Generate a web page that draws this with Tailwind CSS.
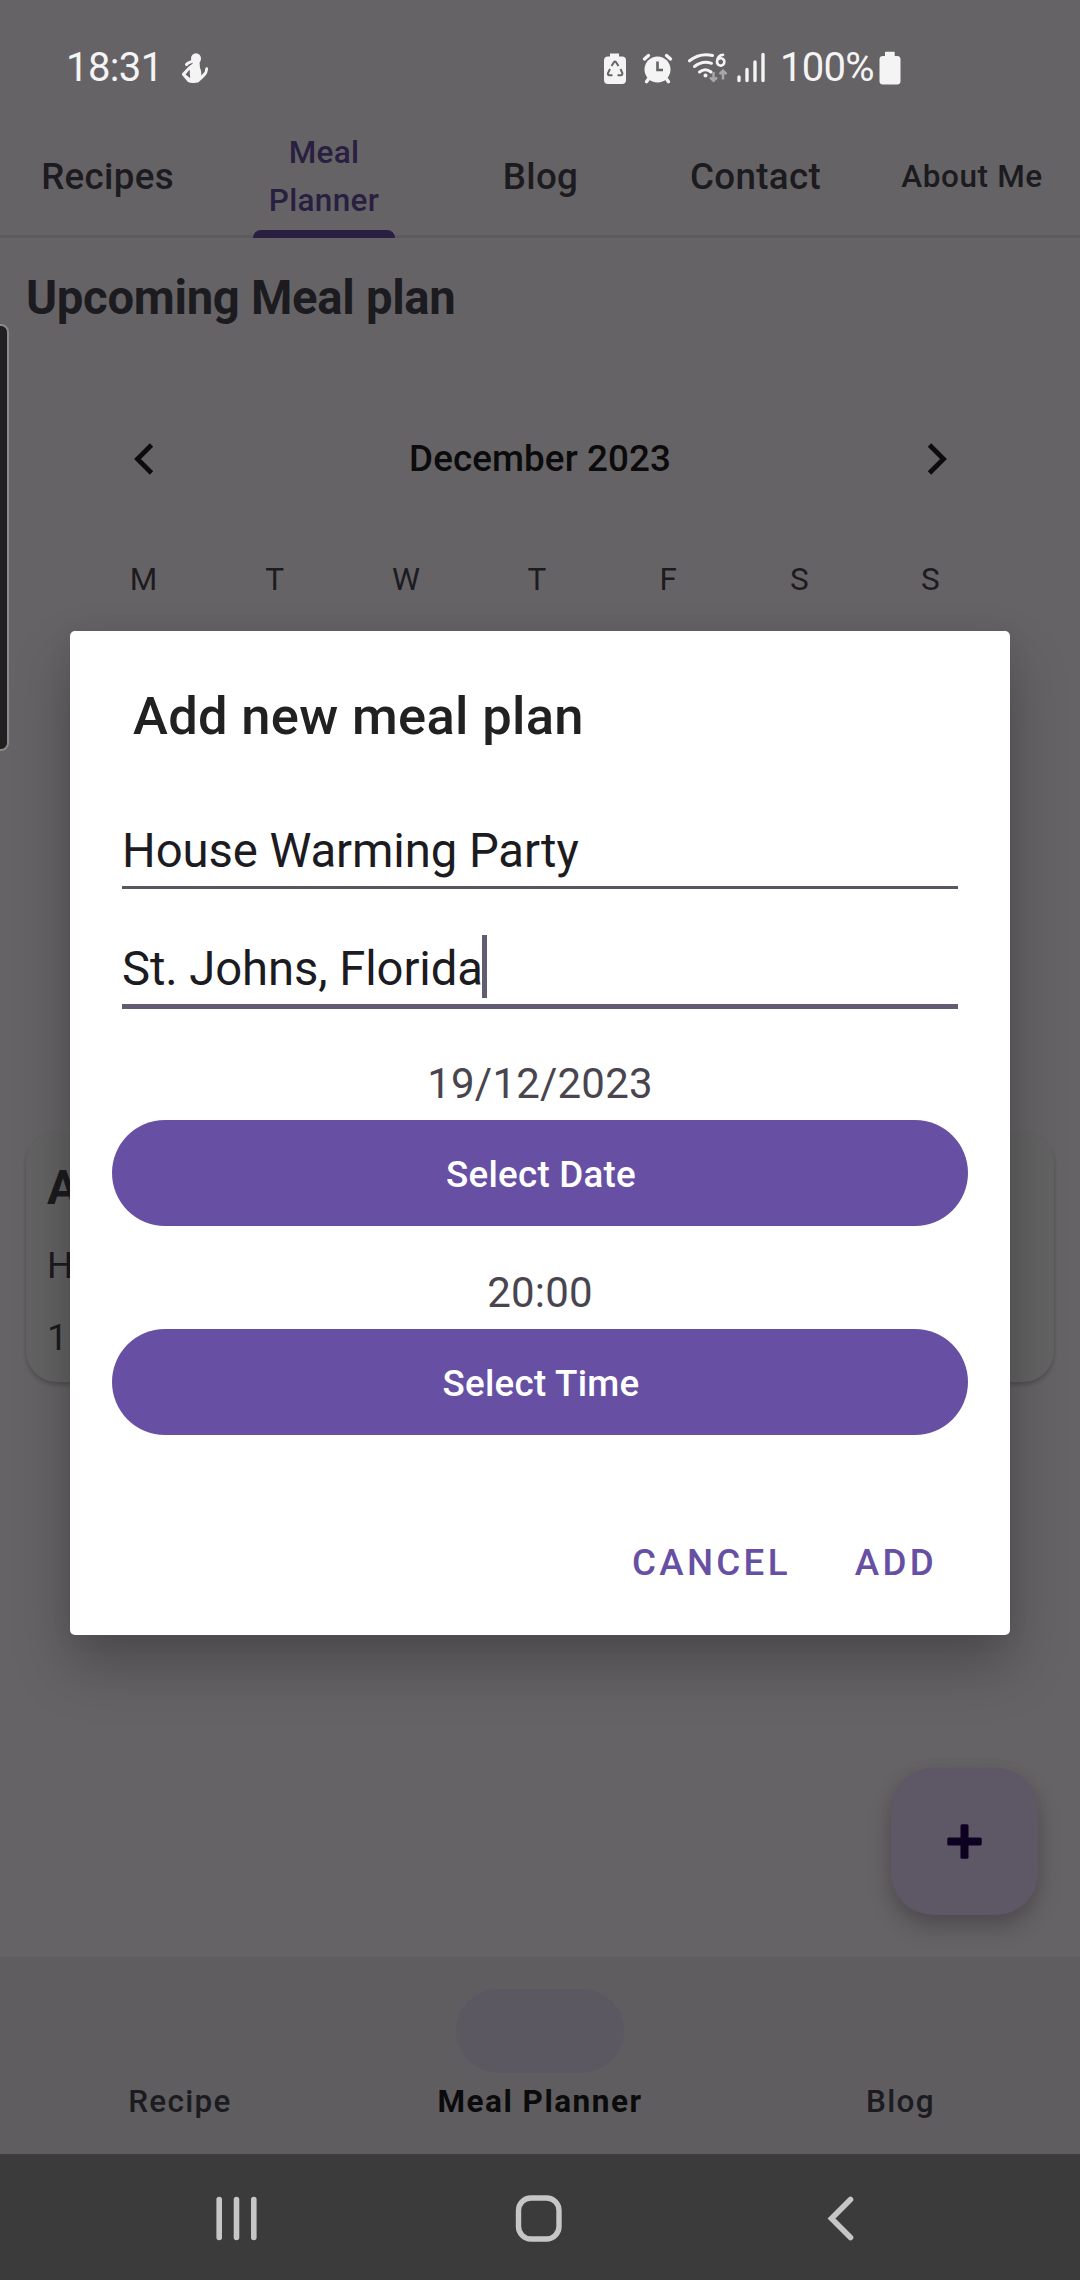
<!DOCTYPE html>
<html lang="en">
<head>
<meta charset="utf-8">
<title>Meal Planner</title>
<script src="https://cdn.jsdelivr.net/npm/@tailwindcss/browser@4"></script>
</head>
<body class="bg-[#666366]">
<div class="relative flex h-[2280px] w-[1080px] flex-col overflow-hidden bg-[#666366] font-['Roboto',sans-serif] leading-none text-[#1c1b1f]">

  <!-- Status bar -->
  <header class="flex h-[115px] shrink-0 items-center pt-5 pl-[66px] text-[#f4f4f4]">
    <span class="w-[114px] text-[40px] tracking-[-0.6px]">18:31</span>
    <svg class="h-8 w-8 shrink-0" viewBox="0 0 32 32" fill="#f4f4f4">
      <ellipse cx="16" cy="6.5" rx="5" ry="5.3"/>
      <path d="M13 10h6.500l.5 6c1 2 1.500 4.500 1.300 7.500l3.200-3.500c.8-1 .2-3 1.200-4.300.9-1 2.600-.2 2.300 1.200-.2 2.500-.8 4.600-2.500 6.600-2.500 3-5 4.500-7 6.700-3 1.200-7.500 1.100-10.500-.3L2.500 23.500c-.8-.7-.8-1.700 0-2.600L9 14.200l3.500-2.500zM5.600 22.400l4.400 3.600c.4-2-.2-3-.2-4.500s.3-2.500-.3-3.700z" fill-rule="evenodd"/>
      <path d="M6.500 12.500c1-2 4.500-2.500 6.500-3.500" fill="none" stroke="#f4f4f4" stroke-width="3" stroke-linecap="round"/>
    </svg>
    <div class="ml-[391px] flex items-center">
      <svg class="h-[34px] w-[165px]" viewBox="603 51 165 34" fill="#f4f4f4">
        <path d="M610 53.500h9v3h3a4 4 0 0 1 4 4V80a4 4 0 0 1-4 4h-14a4 4 0 0 1-4-4V60.500a4 4 0 0 1 4-4h2z"/>
        <g fill="none" stroke="#666366" stroke-width="2">
          <path d="M611.500 66l2.600-4q.9-1 1.800 0l2.600 4"/>
          <path d="M620.500 69l1.800 4q.5 2-1.300 2.300h-3.500"/>
          <path d="M612.500 75.300h-3.300q-1.700-.5-1.200-2.300l2-4"/>
        </g>
        <circle cx="657.500" cy="69.500" r="13"/>
        <path d="M644.500 59l4-3.500M670.500 59l-4-3.500M648.500 79l-2 2.700M666.500 79l2 2.700" stroke="#f4f4f4" stroke-width="3.400" stroke-linecap="round"/>
        <path d="M657.500 61.500v8.500h5.500" fill="none" stroke="#666366" stroke-width="2.600"/>
        <g fill="none" stroke="#f4f4f4" stroke-width="3" stroke-linecap="round">
          <path d="M689.500 60.800q10.500-8.300 23-5.300"/>
          <path d="M694.500 66.500q8-6.200 17-3.200"/>
          <path d="M699.500 72q6-4.500 11.500 0"/>
        </g>
        <circle cx="705.500" cy="75.500" r="2"/>
        <path d="M723 54.800c-3 0-6 2.800-6 7a3.700 3.700 0 1 0 1-2.400" fill="none" stroke="#f4f4f4" stroke-width="2.700" stroke-linecap="round"/>
        <path d="M713.500 72v9m-3.500-3.700l3.500 3.500 3.500-3.500M723 79.500v-9m-3.500 3.700l3.500-3.500 3.500 3.500" fill="none" stroke="#a9a8a9" stroke-width="2.500"/>
        <path d="M739 77v3.600M747 69.500v11.100M755 62v18.600M763 54.500v26.100" stroke="#f4f4f4" stroke-width="3.400" stroke-linecap="round"/>
      </svg>
      <span class="ml-[12px] w-[99px] text-[40px] tracking-[-0.7px]">100%</span>
      <svg class="h-[34px] w-[22px]" viewBox="0 0 22 34" fill="#f4f4f4"><path d="M6 1.500q0-.7.700-.7h8.300q.7 0 .7.700V5H18a3.700 3.700 0 0 1 3.500 4v20.500A3.700 3.700 0 0 1 18 33.500H4A3.700 3.700 0 0 1 .5 29.500V9A3.700 3.700 0 0 1 4 5h2z"/></svg>
    </div>
  </header>

  <!-- Tabs -->
  <nav class="relative grid h-[123px] shrink-0 grid-cols-5 items-center text-center text-[36.75px] font-medium tracking-[0.3px]">
    <div class="absolute inset-x-0 bottom-0 h-[3px] bg-[#5d5b5d]"></div>
    <div class="absolute bottom-0 left-[253px] h-2 w-[142px] rounded-t-[8px] bg-[#291f41]"></div>
    <span class="pt-[2px] pr-px">Recipes</span>
    <span class="text-[31.5px] leading-[48px] text-[#291f41]">Meal<br>Planner</span>
    <span class="pt-[2px] pl-px">Blog</span>
    <span class="pt-[2px] pr-px">Contact</span>
    <span class="text-[31.5px] tracking-[0.6px]">About Me</span>
  </nav>

  <!-- Calendar -->
  <h1 class="flex h-[120px] shrink-0 items-center pt-[2px] pl-[26px] text-[47.25px] font-bold tracking-[-0.3px]">Upcoming Meal plan</h1>
  <div class="flex h-[201px] shrink-0 items-center justify-between pr-[132px] pl-[133px] text-[#0b0b0b]">
    <svg class="h-8 w-[21px]" viewBox="0 0 21 32" fill="none" stroke="#0c0c0c" stroke-width="4.800"><path d="M18.500 2L4.500 16l14 14"/></svg>
    <span class="pt-[2px] pr-[2px] text-[36.75px] font-medium tracking-[0.1px]">December 2023</span>
    <svg class="h-8 w-5" viewBox="1 0 20 32" fill="none" stroke="#0c0c0c" stroke-width="4.800"><path d="M2.500 2l14 14-14 14"/></svg>
  </div>
  <div class="mx-[78px] grid h-10 w-[918px] shrink-0 grid-cols-7 items-center pt-px text-center text-[31.5px]">
    <span>M</span><span>T</span><span>W</span><span>T</span><span>F</span><span>S</span><span>S</span>
  </div>

  <!-- Upcoming meal card -->
  <article class="mx-[26px] mt-[533px] flex h-[250px] shrink-0 flex-col rounded-[31px] bg-[#636363] pt-[21px] pl-[21px] text-[36.75px] shadow-[0_3px_4px_rgba(0,0,0,0.2)]">
    <h2 class="flex h-[72px] items-center text-[47.25px] font-bold">A</h2>
    <p class="flex h-[82px] items-center">H</p>
    <p class="flex h-[62px] items-center tracking-[1px]">19</p>
  </article>

  <!-- Bottom navigation -->
  <footer class="mt-auto h-[197px] shrink-0 bg-[#5f5d60] pt-8 text-[31.5px] font-medium tracking-[1.3px]">
    <div class="mx-auto h-[84px] w-[168px] rounded-full bg-[#5c5862]"></div>
    <div class="grid h-14 grid-cols-3 items-center pt-[2px] text-center">
      <span>Recipe</span><span class="font-bold tracking-[1.5px] text-[#0b0b0c]">Meal Planner</span><span class="pl-px">Blog</span>
    </div>
  </footer>
  <div class="h-[126px] shrink-0 bg-[#3b3b3b]">
    <svg class="h-[126px] w-[1080px]" viewBox="0 2154 1080 126" fill="none" stroke="#c6c6c6" stroke-linecap="round">
      <path d="M219.200 2199.500v38M236.500 2199.500v38M253.800 2199.500v38" stroke-width="5.600"/>
      <rect x="518.500" y="2198" width="40.500" height="41" rx="12.500" stroke-width="5.400"/>
      <path d="M850.500 2199.500l-19 19 19 19" stroke-width="5.600"/>
    </svg>
  </div>

  <!-- Floating action button -->
  <button class="absolute top-[1768px] left-[891px] flex h-[147px] w-[147px] items-center justify-center rounded-[42px] bg-[#5e5765] shadow-[0_12px_22px_rgba(0,0,0,0.22),0_0_14px_rgba(0,0,0,0.05)]">
    <svg class="h-[35px] w-[35px]" viewBox="0 0 35 35" fill="#0d0020"><rect x="0.300" y="13.500" width="34.400" height="8" rx="1.500"/><rect x="13.500" y="0.300" width="8" height="34.400" rx="1.500"/></svg>
  </button>

  <!-- Edge panel handle -->
  <div class="absolute top-[324px] -left-3 h-[427px] w-[21px] rounded-[8px] border-2 border-[#8a8a88] bg-[#202020]"></div>

  <!-- Add meal plan dialog -->
  <section class="absolute top-[631px] left-[70px] flex h-[1004px] w-[940px] flex-col rounded-[5px] bg-white text-[47.25px] shadow-[0_30px_56px_rgba(0,0,0,0.26),0_0_24px_rgba(0,0,0,0.06)]">
    <h2 class="flex h-[170px] items-center pl-[63px] text-[52.5px] font-medium tracking-[0.32px] text-[#212121]">Add new meal plan</h2>
    <div class="mx-[52px] flex h-[88px] items-center border-b-[3px] border-[#5a5561] pt-[17px] tracking-[-0.08px]">House Warming Party</div>
    <div class="mx-[52px] flex h-[120px] items-center border-b-[5px] border-[#625b71] pt-[47px]">
      <span class="tracking-[-0.1px]">St. Johns, Florida</span><i class="-mt-[7px] -ml-px h-[63px] w-[5px] bg-[#625b71]"></i>
    </div>
    <p class="flex h-[111px] items-center justify-center pt-[38px] text-[42px] tracking-[0.2px] text-[#49454f]">19/12/2023</p>
    <button class="mx-[42px] h-[106px] rounded-full bg-[#6750a4] pt-[4px] pl-[2px] text-[36.75px] font-medium tracking-[0.26px] text-white">Select Date</button>
    <p class="flex h-[103px] items-center justify-center pt-[30px] text-[42px] tracking-[0.2px] text-[#49454f]">20:00</p>
    <button class="mx-[42px] h-[106px] rounded-full bg-[#6750a4] pt-[4px] pl-[2px] text-[36.75px] font-medium tracking-[0.26px] text-white">Select Time</button>
    <div class="flex h-[200px] items-center justify-end gap-[64px] pt-[57px] pr-[73px] text-[36.75px] font-medium tracking-[3.28px] text-[#6750a4]">
      <span>CANCEL</span><span>ADD</span>
    </div>
  </section>
</div>
</body>
</html>
